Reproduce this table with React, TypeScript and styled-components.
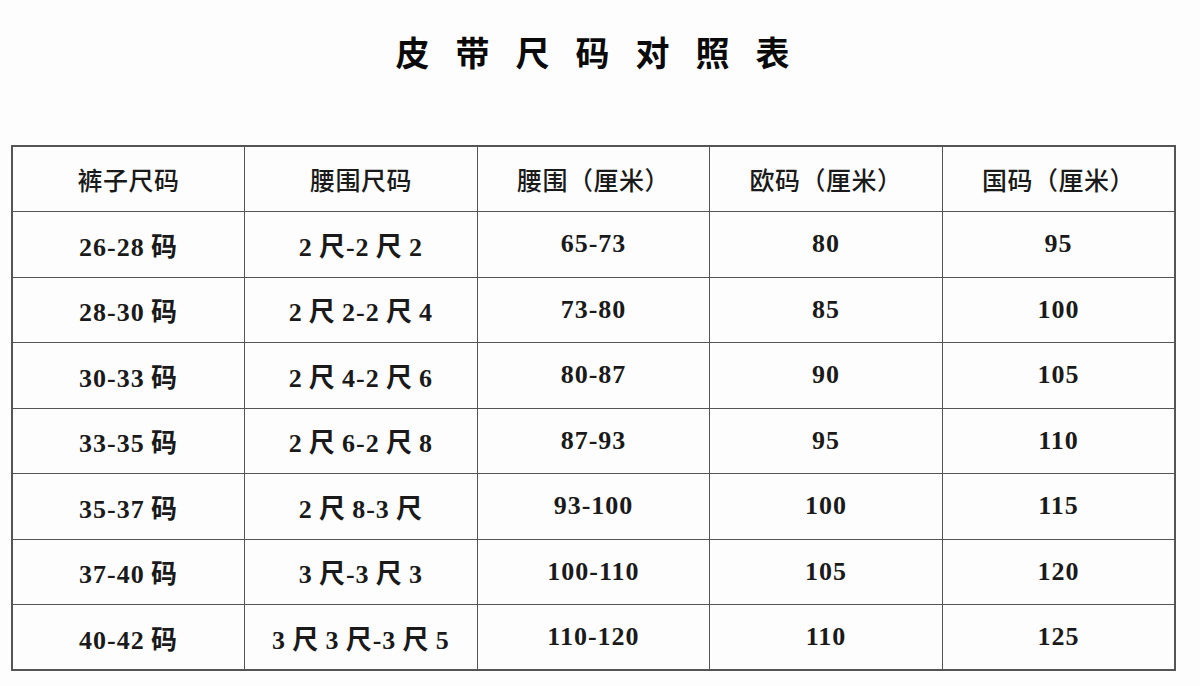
import React from "react";
import styled, { createGlobalStyle } from "styled-components";

const GlobalStyle = createGlobalStyle`
  html, body {
    margin: 0;
    padding: 0;
    background: #fdfdfd;
  }
`;

const header = ["裤子尺码", "腰围尺码", "腰围（厘米）", "欧码（厘米）", "国码（厘米）"];

const rows: string[][] = [
  ["26-28码", "2尺-2尺2", "65-73", "80", "95"],
  ["28-30码", "2尺2-2尺4", "73-80", "85", "100"],
  ["30-33码", "2尺4-2尺6", "80-87", "90", "105"],
  ["33-35码", "2尺6-2尺8", "87-93", "95", "110"],
  ["35-37码", "2尺8-3尺", "93-100", "100", "115"],
  ["37-40码", "3尺-3尺3", "100-110", "105", "120"],
  ["40-42码", "3尺3尺-3尺5", "110-120", "110", "125"],
];

// thin gap between digits and CJK chars, like the source image
function spaced(text: string) {
  return text.replace(/(\d)(?=[尺码])/g, "$1\u2009").replace(/尺(?=\d)/g, "尺\u2009");
}

export default function App() {
  return (
    <>
      <GlobalStyle />
      <Page>
        <Title>皮带尺码对照表</Title>
        <Table>
          <thead>
            <tr>
              {header.map((h) => (
                <HeadCell key={h}>{h}</HeadCell>
              ))}
            </tr>
          </thead>
          <tbody>
            {rows.map((row, i) => (
              <tr key={i}>
                {row.map((c, j) => (
                  <Cell key={j}>{spaced(c)}</Cell>
                ))}
              </tr>
            ))}
          </tbody>
        </Table>
      </Page>
    </>
  );
}

const Page = styled.div`
  width: 1200px;
  height: 686px;
  padding: 0 0 0 11px;
  box-sizing: border-box;
  overflow: hidden;
  background: #fdfdfd;
  color: #111;
`;

const Title = styled.h1`
  margin: 0;
  padding: 30px 0 0 0;
  height: 115px;
  box-sizing: border-box;
  width: 1175px;
  text-align: center;
  font-family: "Noto Sans CJK SC", sans-serif;
  font-weight: 700;
  font-size: 34px;
  line-height: 44px;
  letter-spacing: 26px;
  text-indent: 14px;
  color: #0a0a0a;
`;

const Table = styled.table`
  border-collapse: collapse;
  table-layout: fixed;
  width: 1165px;
  margin-top: 30px;
  border: 2px solid #555;
`;

const CellBase = styled.td`
  border: 1.5px solid #555;
  height: 65.5px;
  padding: 0;
  box-sizing: border-box;
  text-align: center;
  vertical-align: middle;
  font-family: "Liberation Serif", "Noto Sans CJK SC", serif;
  font-size: 26px;
  font-weight: 700;
  letter-spacing: 1px;
  color: #1a1a1a;
`;

const HeadCell = styled(CellBase).attrs({ as: "th" })`
  font-family: "Noto Sans CJK SC", sans-serif;
  font-size: 25px;
  font-weight: 500;
  letter-spacing: 0.5px;
`;

const Cell = styled(CellBase)``;
